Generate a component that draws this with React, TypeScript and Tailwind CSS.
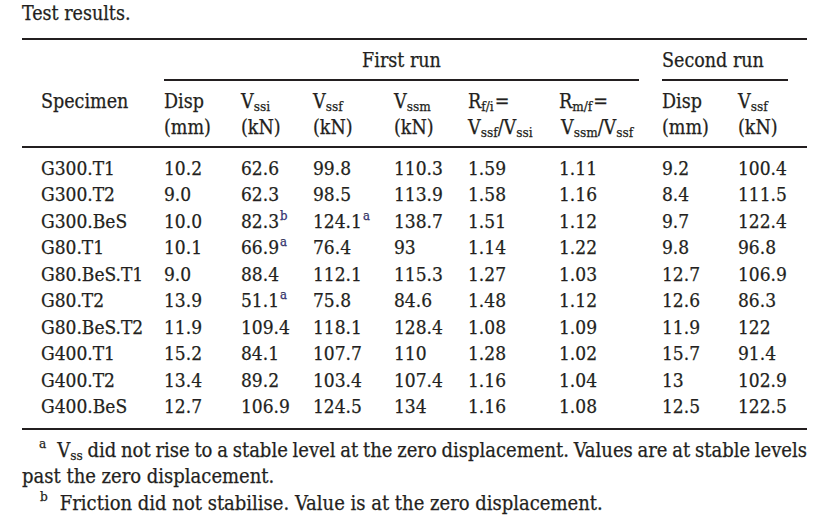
import type { ReactNode } from "react";

type Row = [string, ...string[]];

const rows: Row[] = [
  ["G300.T1", "10.2", "62.6", "99.8", "110.3", "1.59", "1.11", "9.2", "100.4"],
  ["G300.T2", "9.0", "62.3", "98.5", "113.9", "1.58", "1.16", "8.4", "111.5"],
  ["G300.BeS", "10.0", "82.3^b", "124.1^a", "138.7", "1.51", "1.12", "9.7", "122.4"],
  ["G80.T1", "10.1", "66.9^a", "76.4", "93", "1.14", "1.22", "9.8", "96.8"],
  ["G80.BeS.T1", "9.0", "88.4", "112.1", "115.3", "1.27", "1.03", "12.7", "106.9"],
  ["G80.T2", "13.9", "51.1^a", "75.8", "84.6", "1.48", "1.12", "12.6", "86.3"],
  ["G80.BeS.T2", "11.9", "109.4", "118.1", "128.4", "1.08", "1.09", "11.9", "122"],
  ["G400.T1", "15.2", "84.1", "107.7", "110", "1.28", "1.02", "15.7", "91.4"],
  ["G400.T2", "13.4", "89.2", "103.4", "107.4", "1.16", "1.04", "13", "102.9"],
  ["G400.BeS", "12.7", "106.9", "124.5", "134", "1.16", "1.08", "12.5", "122.5"],
];

const grid = "grid grid-cols-[142px_77px_72px_81px_74px_91px_103px_76px_69px]";

function Sub({ children }: { children: ReactNode }) {
  return <sub className="text-[13.5px]">{children}</sub>;
}

function Note({ n }: { n: string }) {
  return <sup className="ml-[1px] text-[13px] top-[-8px] text-[#3a3a9c]">{n}</sup>;
}

function Value({ v }: { v: string }) {
  const [num, note] = v.split("^");
  return (
    <>
      {num}
      {note && <Note n={note} />}
    </>
  );
}

function Rule() {
  return <div className="h-[2px] bg-[#231f20]" />;
}

export default function App() {
  return (
    <div className="min-h-screen bg-white pl-[22px] text-[19px] text-[#231f20] [-webkit-text-stroke:0.25px_#231f20] font-['DejaVu_Serif_Condensed','Liberation_Serif',serif]">
      <div className="w-[785px]">
        <div className="h-[38px] pt-[2px] text-[19.5px] leading-[24px]">Test results.</div>
        <Rule />

        {/* header */}
        <div className={`${grid} text-[19.5px] leading-[24px]`}>
          <div />
          <div className="col-span-6 mr-[23px] border-b-2 border-[#231f20] pt-[9px] pb-[6px] text-center">
            First run
          </div>
          <div className="col-span-2 mr-[19px] border-b-2 border-[#231f20] pt-[9px] pb-[6px]">
            Second run
          </div>
        </div>
        <div className={`${grid} pt-[8px] pb-[6px] text-[19.5px] leading-[25.5px]`}>
          <div className="pl-[19px]">Specimen</div>
          <div>
            Disp
            <br />
            (mm)
          </div>
          <div>
            V<Sub>ssi</Sub>
            <br />
            (kN)
          </div>
          <div>
            V<Sub>ssf</Sub>
            <br />
            (kN)
          </div>
          <div>
            V<Sub>ssm</Sub>
            <br />
            (kN)
          </div>
          <div className="whitespace-nowrap">
            R<Sub>f/i</Sub>
            <span className="ml-[1px]">=</span>
            <br />
            V<Sub>ssf</Sub>/V<Sub>ssi</Sub>
          </div>
          <div className="whitespace-nowrap">
            R<Sub>m/f</Sub>
            <span className="ml-[1px]">=</span>
            <br />
            <span className="ml-[2px]">
              V<Sub>ssm</Sub>/V<Sub>ssf</Sub>
            </span>
          </div>
          <div>
            Disp
            <br />
            (mm)
          </div>
          <div>
            V<Sub>ssf</Sub>
            <br />
            (kN)
          </div>
        </div>
        <Rule />

        {/* body */}
        <div className="pt-[7px] pb-[8px]">
          {rows.map((row) => (
            <div key={row[0]} className={`${grid} leading-[26.45px]`}>
              {row.map((v, i) => (
                <div key={i} className={i === 0 ? "pl-[19px]" : ""}>
                  <Value v={v} />
                </div>
              ))}
            </div>
          ))}
        </div>
        <Rule />

        {/* notes */}
        <div className="pt-[7px] text-[20px] leading-[26.5px]">
          <div className="whitespace-nowrap pl-[17px] text-justify [word-spacing:-3px] [text-align-last:justify]">
            <sup className="mr-[11px] text-[13.5px] top-[-9px]">a</sup>V<Sub>ss</Sub> did not rise to a stable
            level at the zero displacement. Values are at stable levels
          </div>
          <div>past the zero displacement.</div>
          <div className="pl-[18px]">
            <sup className="mr-[12px] text-[13.5px] top-[-9px]">b</sup>Friction did not stabilise. Value is at
            the zero displacement.
          </div>
        </div>
      </div>
    </div>
  );
}
